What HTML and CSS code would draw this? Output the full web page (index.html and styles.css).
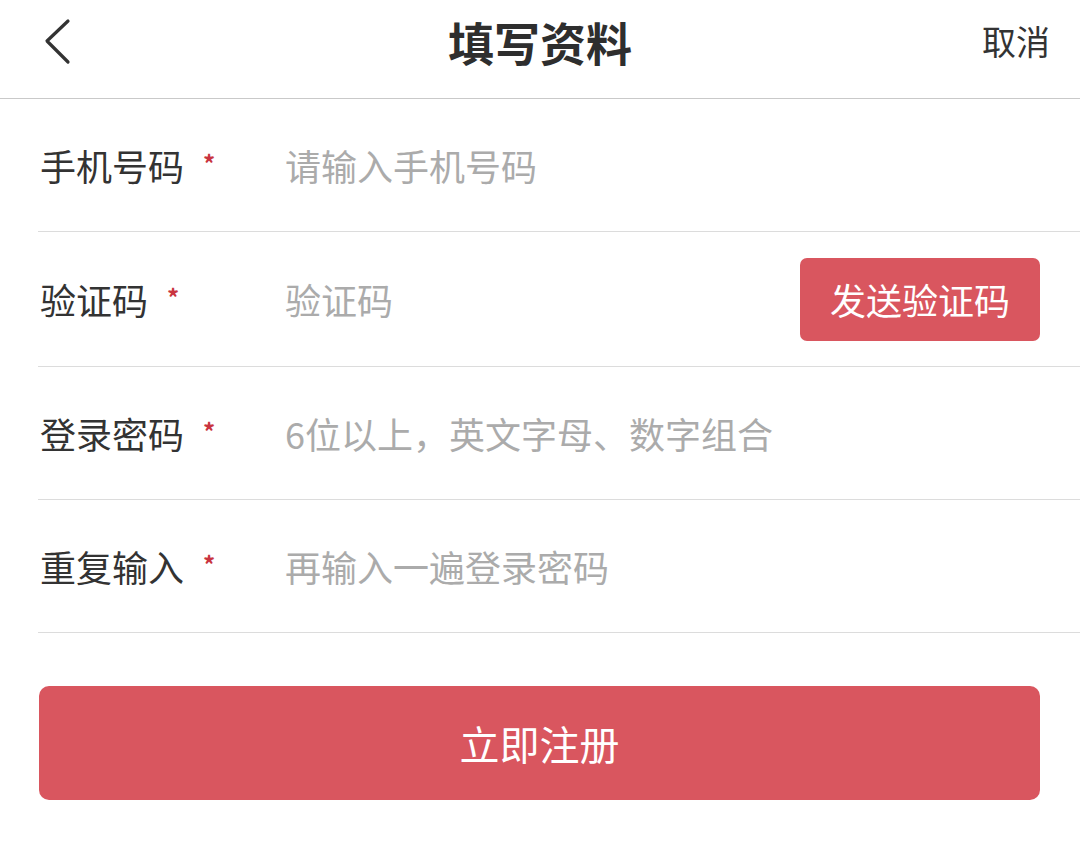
FILE: index.html
```html
<!DOCTYPE html>
<html lang="zh-CN">
<head>
<meta charset="utf-8">
<title>填写资料</title>
<link rel="stylesheet" href="styles.css">
</head>
<body>
<div class="page">
  <header class="nav">
    <div class="nav-left">
      <svg class="back" width="28" height="48" viewBox="0 0 28 48" aria-hidden="true">
        <polyline points="24,4 3,24 24,45" fill="none" stroke="#333" stroke-width="3.2" stroke-linecap="round" stroke-linejoin="round"/>
      </svg>
    </div>
    <h1 class="nav-title">填写资料</h1>
    <div class="nav-right"><span class="cancel">取消</span></div>
  </header>

  <form class="form">
    <div class="row">
      <div class="label"><span>手机号码</span><span class="req">*</span></div>
      <div class="field"><span class="ph">请输入手机号码</span></div>
    </div>
    <div class="row row-code">
      <div class="label"><span>验证码</span><span class="req">*</span></div>
      <div class="field"><span class="ph">验证码</span></div>
      <button type="button" class="send">发送验证码</button>
    </div>
    <div class="row">
      <div class="label"><span>登录密码</span><span class="req">*</span></div>
      <div class="field"><span class="ph">6位以上，英文字母、数字组合</span></div>
    </div>
    <div class="row">
      <div class="label"><span>重复输入</span><span class="req">*</span></div>
      <div class="field"><span class="ph">再输入一遍登录密码</span></div>
    </div>
  </form>

  <div class="actions">
    <button type="button" class="submit">立即注册</button>
  </div>
</div>
</body>
</html>
```

FILE: styles.css
```css
* { box-sizing: border-box; }
html, body {
  margin: 0;
  padding: 0;
  background: #ffffff;
}
body {
  font-family: "Noto Sans CJK SC", "Noto Sans", sans-serif;
  color: #333333;
}
.page {
  width: 1080px;
  height: 852px;
  overflow: hidden;
}
.nav {
  display: grid;
  grid-template-columns: 1fr auto 1fr;
  align-items: center;
  height: 99px;
  padding: 0 30px 16px 30px;
  border-bottom: 1.5px solid #c9c9c9;
}
.nav-left { display: flex; align-items: center; padding-left: 14px; }
.back { display: block; }
.nav-title {
  margin: 0;
  font-size: 46px;
  font-weight: 700;
  color: #2e2e2e;
  line-height: 1;
}
.nav-right {
  display: flex;
  justify-content: flex-end;
}
.cancel {
  font-size: 34px;
  line-height: 1;
  color: #333;
}
.form {
  margin: 0 0 0 38px;
}
.row {
  display: flex;
  align-items: center;
  height: 133px;
  padding: 0 40px 0 2px;
  border-bottom: 1.5px solid #dcdcdc;
}
.row-code { height: 135px; }
.label {
  width: 245px;
  flex: none;
  display: flex;
  align-items: center;
  font-size: 36px;
  color: #333;
  line-height: 1;
}
.req {
  color: #c9343f;
  font-size: 24px;
  font-weight: 700;
  margin-left: 19px;
  position: relative;
  top: -2px;
}
.field {
  flex: 1;
  font-size: 36px;
  line-height: 1;
}
.ph { color: #ababab; }
.send {
  flex: none;
  width: 240px;
  height: 83px;
  border: none;
  border-radius: 7px;
  background: #d9565f;
  color: #ffffff;
  font-family: inherit;
  font-size: 36px;
  padding: 0;
}
.actions {
  padding: 53px 40px 0 39px;
}
.submit {
  display: block;
  width: 100%;
  height: 114px;
  border: none;
  border-radius: 10px;
  background: #d9565f;
  color: #ffffff;
  font-family: inherit;
  font-size: 40px;
  padding: 0;
}
```
